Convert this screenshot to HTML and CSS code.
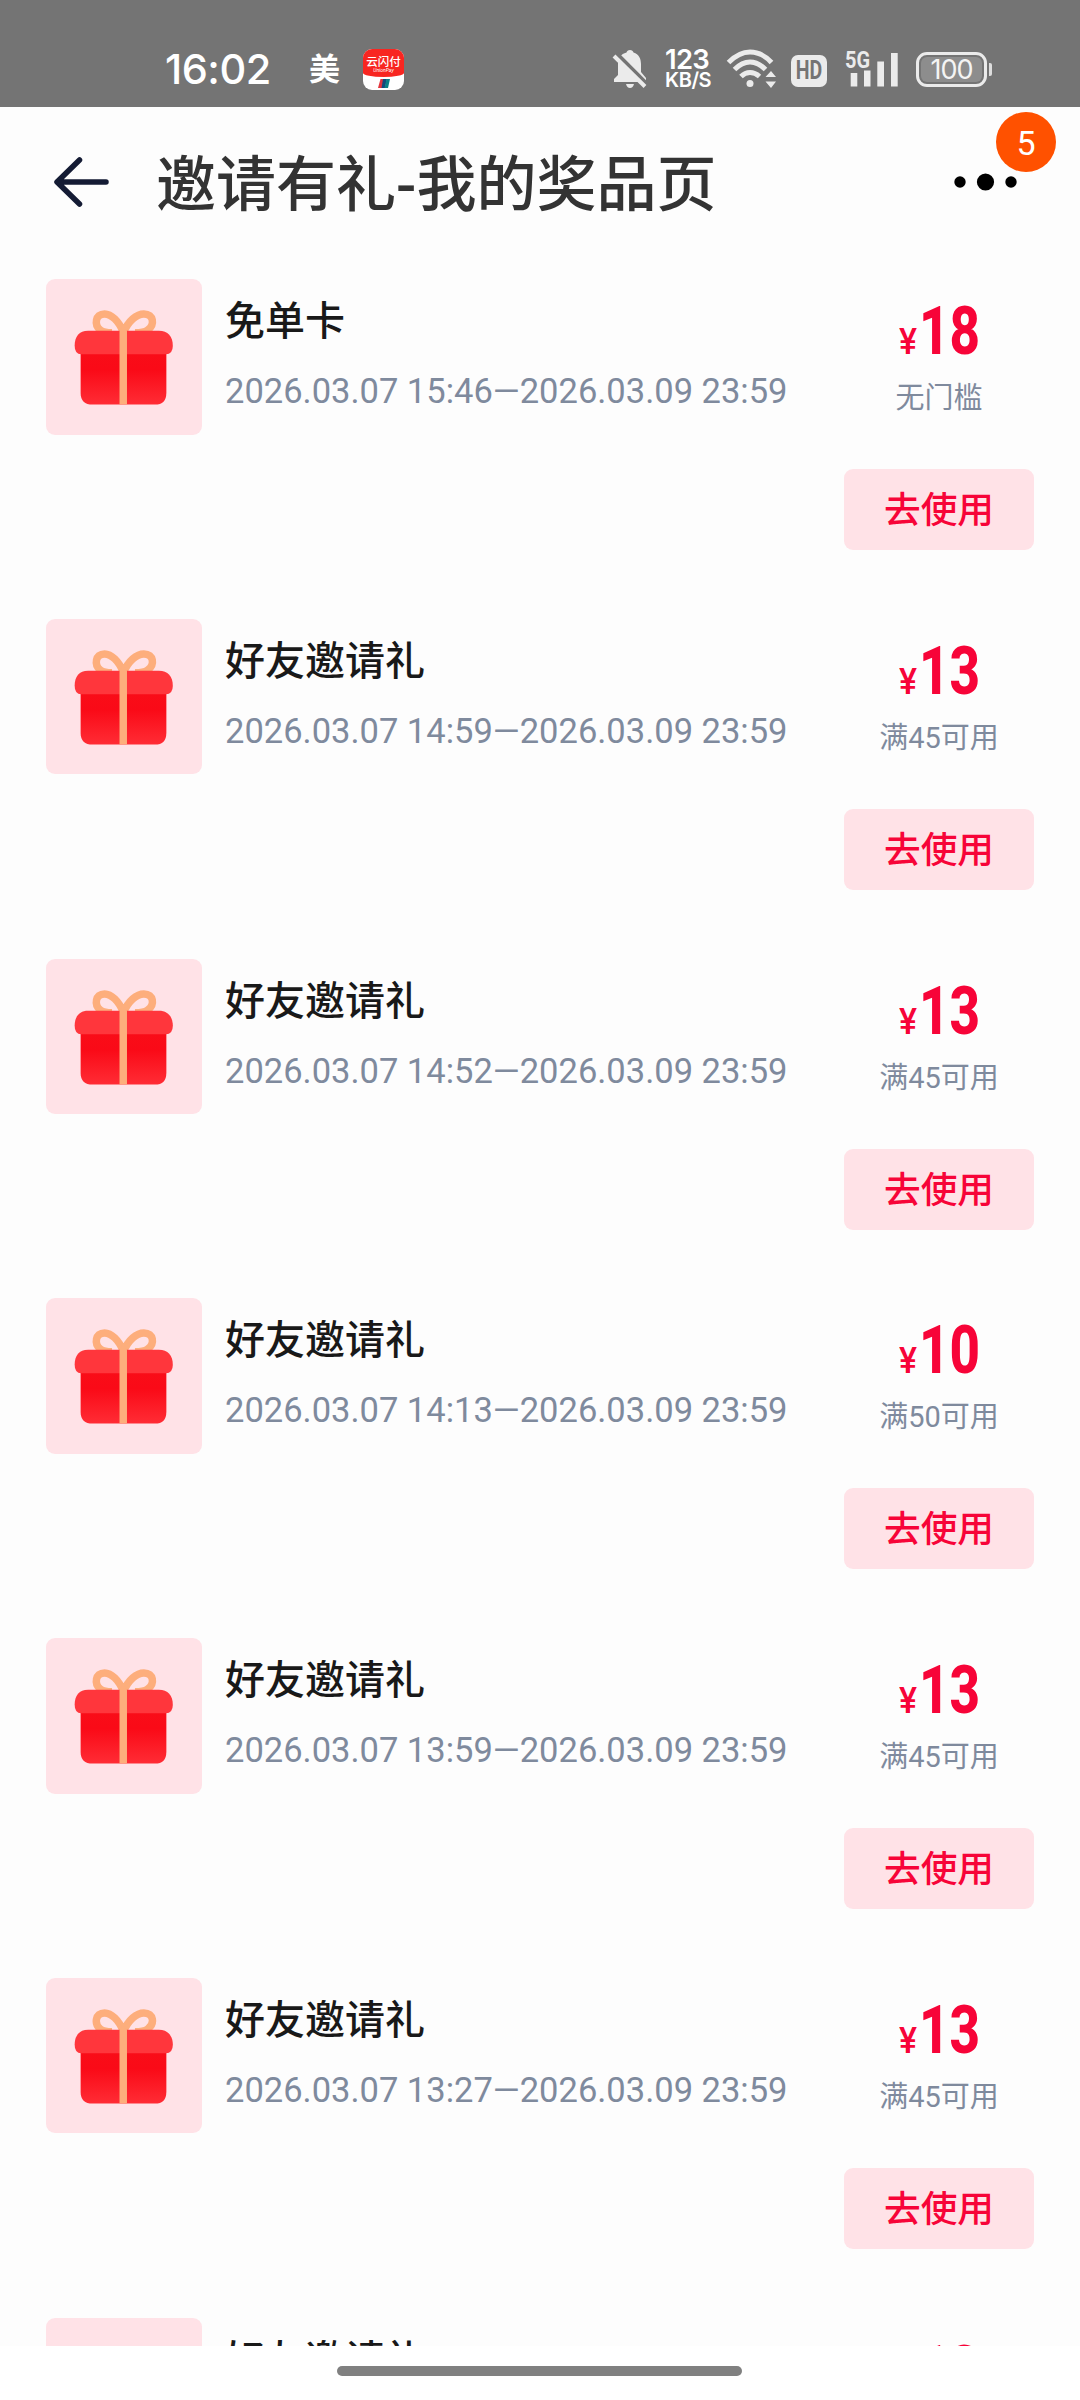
FILE: index.html
```html
<!DOCTYPE html>
<html lang="zh-CN">
<head>
<meta charset="utf-8">
<title>邀请有礼-我的奖品页</title>
<link rel="stylesheet" href="styles.css">
</head>
<body>
<svg class="defs" aria-hidden="true">
  <defs>
    <linearGradient id="box" x1="0" y1="0" x2="0" y2="1">
      <stop offset="0" stop-color="#f90d18"/><stop offset=".35" stop-color="#fa0a17"/><stop offset="1" stop-color="#ff2c35"/>
    </linearGradient>
    <symbol id="gift" viewBox="0 0 156 156">
      <path d="M77.500 54C73 42 65 35 58.500 35C49 35 48 46 54 51C57 53.500 62 54 66 54M77.500 54C82 42 91 35 98 35C108 35 109 46 102 51C99 53.500 93 54 89 54" fill="none" stroke="#fdae7c" stroke-width="7.500"/>
      <path d="M34.500 72H120.500V114Q120.500 126 109 126H46.500Q34.500 126 34.500 114Z" fill="url(#box)"/>
      <path d="M42 52H113C122 52 127 58 127 67Q127 75.500 120 75.500H35Q28.500 75.500 28.500 67C28.500 58 33 52 42 52Z" fill="#ff363c"/>
      <path d="M77.250 46L81 52V126H73.500V52Z" fill="#fdae7c"/>
    </symbol>
  </defs>
</svg>
<div class="screen">
  <div class="status">
    <span class="clock">16:02</span>
    <span class="mei">美</span>
    <span class="pay"><span class="pay-top"><b>云闪付</b><i>UnionPay</i></span><svg class="pay-mark" width="12" height="9" viewBox="0 0 12 9"><path d="M2.500 0H6L4 9H0Z" fill="#e3343c"/><path d="M5 0H9L7 9H3.500Z" fill="#164a7c"/><path d="M8.500 0H12L10 9H6.500Z" fill="#0b7f86"/></svg></span>
    <svg class="bell" width="36" height="40" viewBox="0 0 36 40" fill="#ebebeb"><path d="M18 1C20 1 21 2 21.500 3.500C27 5 29 10 29 15V23L34 29V33H2V30L6 26V15C6 9 9 5 14.500 3.500C15 2 16 1 18 1Z"/><path d="M14 35H22Q21 39 18 39Q15 39 14 35Z"/><path d="M4 4L35 35" stroke="#747474" stroke-width="4"/><path d="M2 7L33 37.500" stroke="#ebebeb" stroke-width="4"/></svg>
    <span class="speed"><b>123</b><b class="unit">KB/S</b></span>
    <svg class="wifi" width="50" height="42" viewBox="0 0 50 42"><g fill="none" stroke="#ebebeb" stroke-width="5"><path d="M2.500 14.500Q13 4 24 4Q36 4 45.500 14.500"/><path d="M8.500 21.500Q16 14 24 14Q32 14 39.500 21.500"/><path d="M15 28.500Q19 24.500 24 24.500Q29 24.500 33.500 28.500"/></g><circle cx="24" cy="35.500" r="3.500" fill="#ebebeb"/><path d="M39.500 29L45 23L50 29ZM39.500 33.500L45 40L50 33.500Z" fill="#ebebeb"/></svg>
    <span class="hd"><b>HD</b></span>
    <span class="signal"><b>5G</b><svg width="48" height="36" viewBox="0 0 48 36" fill="#ebebeb"><path d="M.7 22H7.300V35.500H.7ZM14 19.500H20.500V35.500H14ZM27.300 10.500H34V35.500H27.300ZM41 2H47.700V35.500H41Z"/></svg></span>
    <span class="battery"><span class="level">100</span></span><span class="nub"></span>
  </div>
  <header class="head">
    <svg class="back" width="60" height="54" viewBox="0 0 60 54"><path d="M28.500 5L6 27L28.500 49M7 27H55" fill="none" stroke="#141b34" stroke-width="5.500" stroke-linecap="round" stroke-linejoin="round"/></svg>
    <h1>邀请有礼-我的奖品页</h1>
    <div class="more">
      <svg width="64" height="20" viewBox="0 0 64 20"><circle cx="6" cy="10" r="5.700"/><circle cx="31.500" cy="10" r="8.600"/><circle cx="57" cy="10" r="5.700"/></svg>
      <span class="badge">5</span>
    </div>
  </header>
  <main class="list">
    <article class="row"><svg class="thumb"><use href="#gift"/></svg><div class="info"><h2>免单卡</h2><p>2026.03.07 15:46—2026.03.09 23:59</p></div><div class="side"><div class="price"><span class="yen">¥</span><span class="num">18</span></div><p class="rule">无门槛</p><button>去使用</button></div></article>
    <article class="row"><svg class="thumb"><use href="#gift"/></svg><div class="info"><h2>好友邀请礼</h2><p>2026.03.07 14:59—2026.03.09 23:59</p></div><div class="side"><div class="price"><span class="yen">¥</span><span class="num">13</span></div><p class="rule">满45可用</p><button>去使用</button></div></article>
    <article class="row"><svg class="thumb"><use href="#gift"/></svg><div class="info"><h2>好友邀请礼</h2><p>2026.03.07 14:52—2026.03.09 23:59</p></div><div class="side"><div class="price"><span class="yen">¥</span><span class="num">13</span></div><p class="rule">满45可用</p><button>去使用</button></div></article>
    <article class="row"><svg class="thumb"><use href="#gift"/></svg><div class="info"><h2>好友邀请礼</h2><p>2026.03.07 14:13—2026.03.09 23:59</p></div><div class="side"><div class="price"><span class="yen">¥</span><span class="num">10</span></div><p class="rule">满50可用</p><button>去使用</button></div></article>
    <article class="row"><svg class="thumb"><use href="#gift"/></svg><div class="info"><h2>好友邀请礼</h2><p>2026.03.07 13:59—2026.03.09 23:59</p></div><div class="side"><div class="price"><span class="yen">¥</span><span class="num">13</span></div><p class="rule">满45可用</p><button>去使用</button></div></article>
    <article class="row"><svg class="thumb"><use href="#gift"/></svg><div class="info"><h2>好友邀请礼</h2><p>2026.03.07 13:27—2026.03.09 23:59</p></div><div class="side"><div class="price"><span class="yen">¥</span><span class="num">13</span></div><p class="rule">满45可用</p><button>去使用</button></div></article>
    <article class="row"><svg class="thumb"><use href="#gift"/></svg><div class="info"><h2>好友邀请礼</h2></div><div class="side"><div class="price"><span class="yen">¥</span><span class="num">13</span></div></div></article>
  </main>
  <footer class="nav"><span class="pill"></span></footer>
</div>
</body>
</html>
```
FILE: styles.css
```css
* { box-sizing: border-box; margin: 0; padding: 0; }
body { font-family: Roboto, "Noto Sans CJK SC", sans-serif; background: #fdfdfd; }
svg { display: block; flex: none; }
.defs { position: absolute; width: 0; height: 0; }
.screen { width: 1080px; height: 2400px; display: flex; flex-direction: column; overflow: hidden; }

.status { height: 107px; flex: none; background: #747474; color: #fff; display: flex; align-items: center; padding: 31px 0 0 165px; white-space: nowrap; }
.status > * { flex: none; }
.clock { width: 144px; font: 500 41.500px/40px Inter, sans-serif; letter-spacing: -.5px; }
.mei { width: 54px; padding-bottom: 4px; font: 700 31px/40px "Noto Sans CJK SC", sans-serif; }
.pay { width: 41px; height: 41px; border-radius: 9px; background: #fff; overflow: hidden; display: flex; flex-direction: column; align-items: center; margin-right: 208px; }
.pay-top { width: 100%; height: 28px; background: #f82621; border-radius: 0 0 50% 50% / 0 0 4px 4px; display: flex; flex-direction: column; align-items: center; padding-top: 6px; }
.pay-top b { font: 500 11.500px/12px "Noto Sans CJK SC", sans-serif; }
.pay-top i { font: italic 5px/6px Roboto, sans-serif; }
.pay-mark { margin-top: 2px; }
.bell { margin-right: 17px; }
.speed { width: 61px; display: flex; flex-direction: column; }
.speed b { font: 600 27.500px/21px Inter, sans-serif; letter-spacing: -.7px; }
.speed .unit { font-size: 20px; line-height: 20px; letter-spacing: -.4px; }
.wifi { margin-right: 15px; }
.hd { width: 36px; height: 32px; margin: 3px 18px 0 0; border-radius: 7px; background: #ebebeb; color: #747474; display: flex; align-items: center; justify-content: center; }
.hd b { font: 700 25px/32px Roboto, sans-serif; transform: scaleX(.78); }
.signal { position: relative; width: 71px; color: #ebebeb; padding-left: 5px; }
.signal b { position: absolute; left: 0; top: -2px; font: 700 24px/22px Roboto, sans-serif; transform: scaleX(.83); transform-origin: left; }
.battery { width: 71px; height: 35px; border: 3px solid #ebebeb; border-radius: 11px; padding: 2px; }
.level { display: block; height: 25px; border-radius: 6px; background: #8d8d8d; font: 400 27px/25px Inter, sans-serif; text-align: center; color: #f4f4f4; letter-spacing: -1px; }
.nub { width: 3px; height: 13px; margin-left: 2px; background: #ddd; border-radius: 0 2px 2px 0; }

.head { height: 172px; flex: none; display: flex; align-items: center; padding: 0 62px 22px 51px; }
.head h1 { margin-left: 45px; padding-top: 8px; font-size: 60px; line-height: 80px; font-weight: 500; color: #333; white-space: nowrap; flex: 1; }
.more { position: relative; }
.badge { position: absolute; left: 42px; top: -60px; width: 60px; height: 60px; border-radius: 50%; background: #ff5100; color: #fff; font-size: 34px; line-height: 63px; text-align: center; }

.list { height: 2067px; flex: none; overflow: hidden; padding: 0 46px; }
.row { height: 339.800px; display: flex; align-items: flex-start; }
.thumb { width: 156px; height: 155.500px; border-radius: 9px; background: #ffe2e7; }
.info { flex: 1; margin-left: 23px; padding-top: 15px; }
.info h2 { font-size: 40px; line-height: 56px; font-weight: 500; color: #191919; }
.info p { margin-top: 20px; font-size: 34.500px; line-height: 42px; color: #7f8a9d; white-space: nowrap; }
.side { width: 190px; display: flex; flex-direction: column; align-items: center; }
.price { display: flex; align-items: baseline; justify-content: center; color: #f70438; height: 80px; padding-top: 12px; line-height: 80px; }
.yen { width: 20px; font-size: 36px; font-weight: 500; transform: scaleX(.94); transform-origin: left; }
.num { font-size: 67px; font-weight: 800; width: 61px; transform: scaleX(.79); transform-origin: left; }
.rule { height: 42px; margin-top: 18px; font-size: 29px; line-height: 42px; color: #7f8a9d; }
.side button { width: 190px; height: 81px; margin-top: 50px; padding-top: 3px; border: 0; border-radius: 9px; background: #ffe2e7; color: #f70438; font: 500 36.700px/78px Roboto, "Noto Sans CJK SC", sans-serif; }

.nav { flex: 1; background: #fff; display: flex; justify-content: center; padding: 20px 2px 0 0; }
.pill { width: 405px; height: 10px; border-radius: 5px; background: #808080; }
```
